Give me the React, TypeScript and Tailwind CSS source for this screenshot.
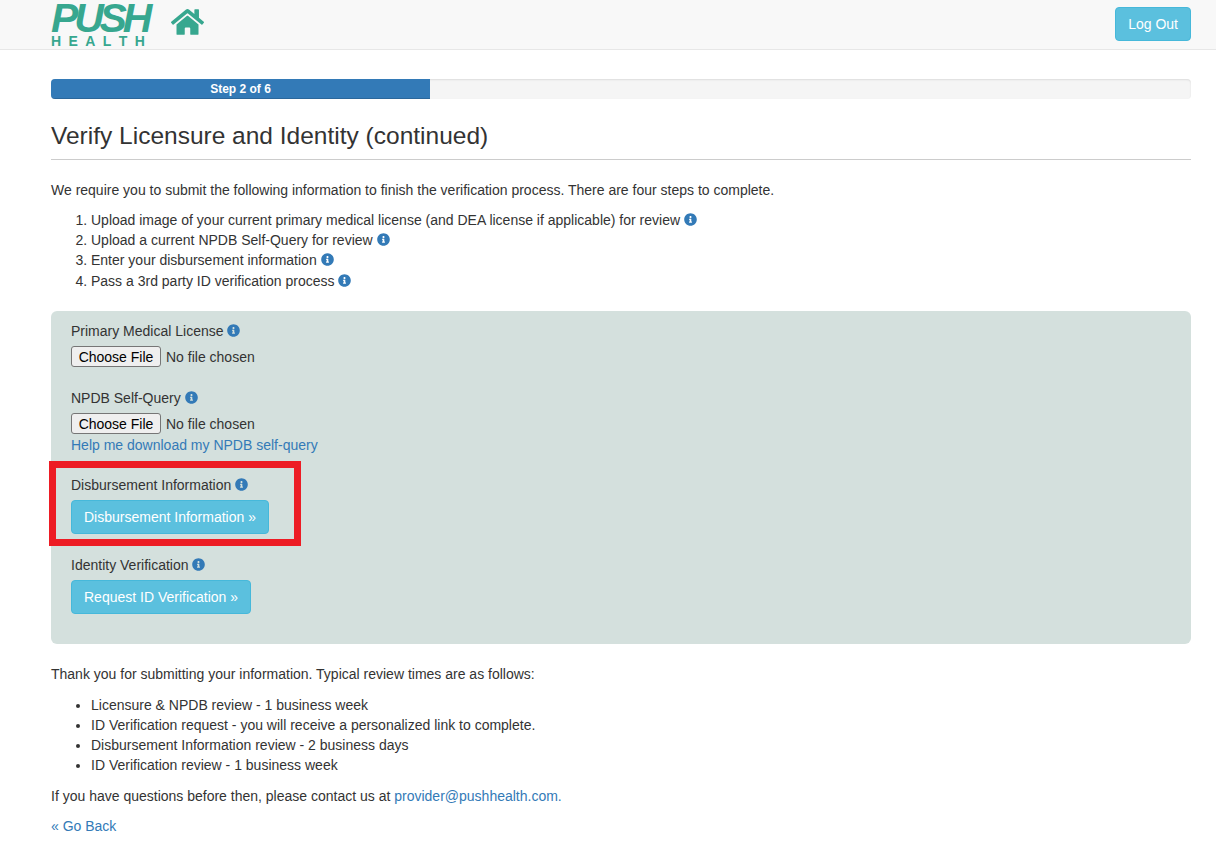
import React from 'react';
import { FaHome, FaInfoCircle } from 'react-icons/fa';

const Info = () => <FaInfoCircle className="inline-block align-[-1px] w-[13px] h-[13px] text-[#337ab7]" />;

const FileField = () => (
  <input
    type="file"
    className="block w-full h-[21px] text-sm leading-[21px] text-[#333] file:h-[21px] file:w-[90px] file:mr-[5px] file:bg-[#efefef] file:border file:border-solid file:border-[#767676] file:rounded-[3px] file:text-black file:text-sm"
  />
);

const InfoButton = ({ children, className = '' }: { children: React.ReactNode; className?: string }) => (
  <button className={`h-[34px] px-3 rounded border border-[#46b8da] bg-[#5bc0de] text-white text-sm ${className}`}>{children}</button>
);

export default function App() {
  const steps = [
    'Upload image of your current primary medical license (and DEA license if applicable) for review',
    'Upload a current NPDB Self-Query for review',
    'Enter your disbursement information',
    'Pass a 3rd party ID verification process',
  ];
  const reviewTimes = [
    'Licensure & NPDB review - 1 business week',
    'ID Verification request - you will receive a personalized link to complete.',
    'Disbursement Information review - 2 business days',
    'ID Verification review - 1 business week',
  ];

  return (
    <div className="min-h-screen bg-white text-[#333] text-sm leading-5 font-['Liberation_Sans',Arial,sans-serif]">
      {/* Navbar */}
      <div className="h-[50px] bg-[#f8f8f8] border-b border-[#e7e7e7] pl-[51px] pr-[25px]">
        <div className="flex justify-between items-start">
          <div className="flex items-start">
            <div className="w-[100px] h-[49px] text-[#37a78f] font-bold">
              <div className="h-[35px] pt-[1px] text-[41px] leading-[34px] italic tracking-[-4.2px]">PUSH</div>
              <div className="flex justify-between pr-[6px] text-[14px] leading-[12px]">
                <span>H</span><span>E</span><span>A</span><span>L</span><span>T</span><span>H</span>
              </div>
            </div>
            <FaHome className="ml-[20px] mt-[7px] w-[33px] h-[30px] text-[#37a78f]" />
          </div>
          <InfoButton className="mt-[7px]">Log Out</InfoButton>
        </div>
      </div>

      <div className="pl-[51px] pr-[25px] pb-[23px]">
        {/* Progress */}
        <div className="mt-[29px] h-5 bg-[#f5f5f5] rounded shadow-[inset_0_1px_2px_rgba(0,0,0,0.1)] overflow-hidden">
          <div className="w-[379px] h-5 bg-[#337ab7] text-white text-xs leading-5 font-bold text-center shadow-[inset_0_-1px_0_rgba(0,0,0,0.15)]">Step 2 of 6</div>
        </div>

        <h2 className="mt-5 pb-[7px] border-b border-[#ccc] text-[24.5px] leading-[33px] font-normal">Verify Licensure and Identity (continued)</h2>

        <p className="mt-5">We require you to submit the following information to finish the verification process. There are four steps to complete.</p>

        <ol className="mt-[10px] pl-10 list-decimal">
          {steps.map((step) => (
            <li key={step} className="leading-[20.2px]">{step} <Info /></li>
          ))}
        </ol>

        {/* Upload panel */}
        <div className="mt-5 h-[333px] bg-[#d4e0dd] rounded-md px-5 pt-[10px]">
          <div className="h-[67px]">
            <div className="mb-[5px]">Primary Medical License <Info /></div>
            <FileField />
          </div>
          <div className="h-[87px]">
            <div className="mb-[5px]">NPDB Self-Query <Info /></div>
            <FileField />
            <a className="block mt-[1px] text-[#337ab7]">Help me download my NPDB self-query</a>
          </div>
          <div className="h-[80px] relative">
            <div className="absolute left-[-22px] top-[-14px] w-[252px] h-[85px] border-[7px] border-[#ed1c24]" />
            <div className="mb-[5px]">Disbursement Information <Info /></div>
            <InfoButton>Disbursement Information »</InfoButton>
          </div>
          <div>
            <div className="mb-[5px]">Identity Verification <Info /></div>
            <InfoButton>Request ID Verification »</InfoButton>
          </div>
        </div>

        <p className="mt-5">Thank you for submitting your information. Typical review times are as follows:</p>

        <ul className="mt-[11px] pl-10 list-disc">
          {reviewTimes.map((item) => (
            <li key={item}>{item}</li>
          ))}
        </ul>

        <p className="mt-[11px]">If you have questions before then, please contact us at <a className="text-[#337ab7]">provider@pushhealth.com.</a></p>
        <p className="mt-[10px]"><a className="text-[#337ab7]">« Go Back</a></p>
      </div>
    </div>
  );
}
